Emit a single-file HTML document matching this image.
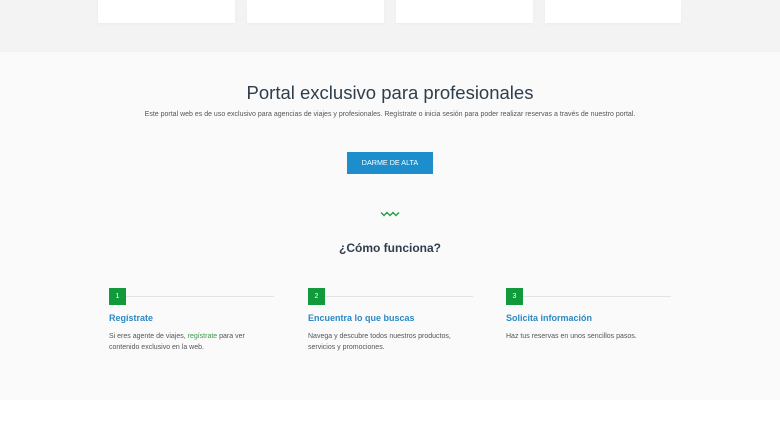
<!DOCTYPE html>
<html><head><meta charset="utf-8"><style>
*{margin:0;padding:0;box-sizing:border-box}
body{width:780px;height:440px;overflow:hidden;font-family:"Liberation Sans",sans-serif;background:#fff;position:relative}
.top{position:absolute;left:0;top:0;width:780px;height:52px;background:#f3f3f4}
.card{position:absolute;top:0;height:23px;background:#fff;box-shadow:0 1px 3px rgba(0,0,0,.04)}
.sec{position:absolute;left:0;top:52px;width:780px;height:348px;background:#fafafa}
h1{position:absolute;top:82px;left:0;width:780px;text-align:center;font-weight:normal;font-size:18.5px;color:#2e3e4c}
.sub{position:absolute;top:111px;left:0;width:780px;text-align:center;font-size:7px;color:#555}
.btn{position:absolute;left:347px;top:152px;width:86px;height:22px;background:#1d8ecb;color:#fff;font-size:7.2px;text-align:center;line-height:22px}
h2{position:absolute;top:241px;left:0;width:780px;text-align:center;font-size:12px;color:#2e3e4c;font-weight:bold}
.step{position:absolute;top:288px;width:165px}
.num{width:17px;height:17px;background:#109a3c;color:#fff;font-size:7px;text-align:center;line-height:17px}
.line{position:absolute;left:17px;top:8px;right:0;height:1px;background:#e3e3e3}
.t{margin-top:8px;font-size:9px;font-weight:bold;color:#2a8ac4}
.d{margin-top:8px;font-size:7px;line-height:11px;color:#555}
.d span{color:#3a9a4a}
</style></head><body>
<div class="top"></div>
<div class="card" style="left:98px;width:137px"></div>
<div class="card" style="left:247px;width:137px"></div>
<div class="card" style="left:396px;width:137px"></div>
<div class="card" style="left:545px;width:136px"></div>
<div class="sec"></div>
<h1>Portal exclusivo para profesionales</h1>
<div class="sub">Este portal web es de uso exclusivo para agencias de viajes y profesionales. Regístrate o inicia sesión para poder realizar reservas a través de nuestro portal.</div>
<div class="btn">DARME DE ALTA</div>
<svg style="position:absolute;left:380px;top:211px" width="20" height="6" viewBox="0 0 20 6"><path d="M1 1.5 L4 4.5 L7 1.5 L10 4.5 L13 1.5 L16 4.5 L19 1.5" fill="none" stroke="#2ea04a" stroke-width="1.5"/></svg>
<h2>¿Cómo funciona?</h2>
<div class="step" style="left:109px"><div class="num">1</div><div class="line"></div><div class="t">Regístrate</div><div class="d">Si eres agente de viajes, <span>regístrate</span> para ver<br>contenido exclusivo en la web.</div></div>
<div class="step" style="left:308px"><div class="num">2</div><div class="line"></div><div class="t">Encuentra lo que buscas</div><div class="d">Navega y descubre todos nuestros productos,<br>servicios y promociones.</div></div>
<div class="step" style="left:506px"><div class="num">3</div><div class="line"></div><div class="t">Solicita información</div><div class="d">Haz tus reservas en unos sencillos pasos.</div></div>
</body></html>
